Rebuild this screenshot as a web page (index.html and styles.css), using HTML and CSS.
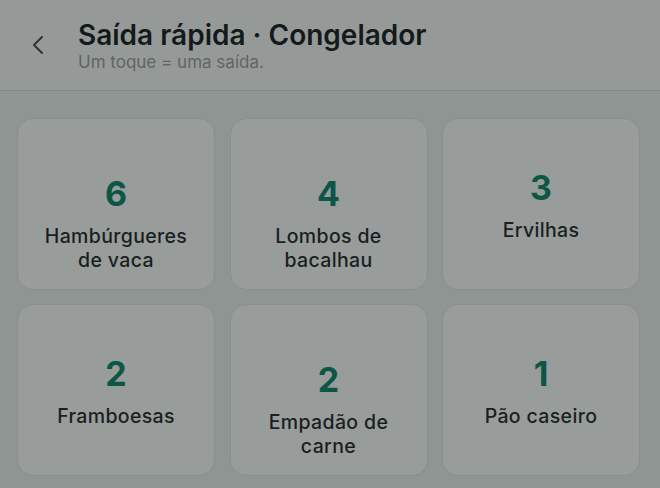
FILE: index.html
```
<!DOCTYPE html>
<html lang="pt">
<head>
  <meta charset="UTF-8" />
  <meta name="viewport" content="width=device-width, initial-scale=1" />
  <title>Saída rápida · Congelador</title>
  <link rel="stylesheet" href="styles.css">
</head>
<body>

<header class="topo">
  <button class="voltar" aria-label="Voltar">
    <svg width="14" height="20" viewBox="0 0 14 20" fill="none">
      <path d="M11 2 L3 10 L11 18" stroke="#2d3432" stroke-width="2" stroke-linecap="round" stroke-linejoin="round"/>
    </svg>
  </button>
  <div class="titulos">
    <h1>Saída rápida · Congelador</h1>
    <p>Um toque = uma saída.</p>
  </div>
</header>

<main class="grelha">
  <button class="cartao duas-linhas">
    <span class="qtd">6</span>
    <span class="nome">Hambúrgueres<br>de vaca</span>
  </button>
  <button class="cartao duas-linhas">
    <span class="qtd">4</span>
    <span class="nome">Lombos de<br>bacalhau</span>
  </button>
  <button class="cartao">
    <span class="qtd">3</span>
    <span class="nome">Ervilhas</span>
  </button>
  <button class="cartao">
    <span class="qtd">2</span>
    <span class="nome">Framboesas</span>
  </button>
  <button class="cartao duas-linhas">
    <span class="qtd">2</span>
    <span class="nome">Empadão de<br>carne</span>
  </button>
  <button class="cartao">
    <span class="qtd">1</span>
    <span class="nome">Pão caseiro</span>
  </button>
</main>

</body>
</html>
```

FILE: styles.css
```
body {
  margin: 0;
  font-family: Inter, 'Noto Sans', sans-serif;
  background: #8f9593;
  color: #1a1f1e;
  height: 488px;
  overflow: hidden;
}
.topo {
  display: flex;
  align-items: flex-start;
  height: 91px;
  background: #959a99;
  border-bottom: 1px solid #858a89;
  box-sizing: border-box;
}
.voltar {
  background: none;
  border: none;
  padding: 0;
  margin: 35px 0 0 31px;
  width: 14px;
  height: 20px;
  cursor: pointer;
}
.titulos {
  margin-left: 33px;
  padding-top: 18px;
}
.titulos h1 {
  margin: 0;
  font-size: 28px;
  line-height: 34px;
  font-weight: 600;
  color: #141a19;
}
.titulos p {
  margin: 0;
  font-size: 17px;
  line-height: 21px;
  color: #5e6563;
}
.grelha {
  display: grid;
  grid-template-columns: repeat(3, 1fr);
  grid-auto-rows: 172px;
  gap: 14px 14.5px;
  padding: 27px 20px 0 17px;
}
.cartao {
  background: #989d9c;
  border: 1px solid #8a8f8e;
  border-radius: 16px;
  display: flex;
  flex-direction: column;
  align-items: center;
  justify-content: center;
  padding: 2px 0 0;
  font-family: inherit;
  cursor: pointer;
}
.cartao.duas-linhas {
  padding-top: 38px;
}
.qtd {
  font-size: 34px;
  line-height: 40px;
  font-weight: 700;
  color: #0d5646;
}
.nome {
  margin-top: 10px;
  font-size: 19.5px;
  line-height: 24px;
  font-weight: 500;
  color: #1a1f1e;
  text-align: center;
  letter-spacing: 0.35px;
}
```
